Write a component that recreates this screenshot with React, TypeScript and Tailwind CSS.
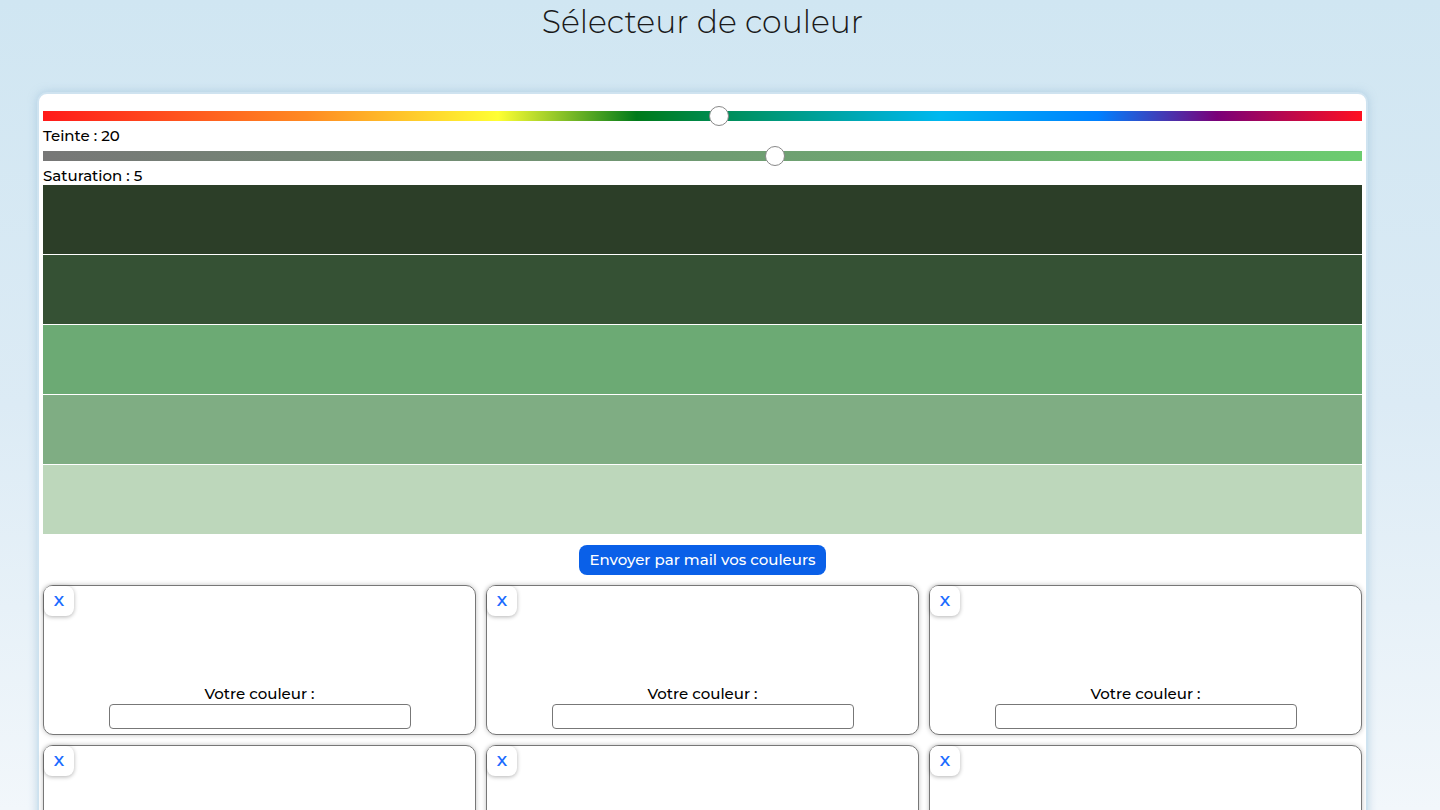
import React from "react";

const bands = ["#2c3e28", "#355134", "#6caa74", "#7fad83", "#bdd7bb"];

function Card() {
  return (
    <div className="relative h-[150px] rounded-[10px] border border-[#777] bg-white shadow-[0_0_5px_rgba(0,0,0,0.25)]">
      <div className="absolute left-0 top-0 flex h-[30px] w-[30px] items-center justify-center rounded-[8px] bg-white text-[15px] font-semibold text-[#1a6bff] shadow-[0_1px_4px_rgba(0,0,0,0.3)]">
        X
      </div>
      <div className="absolute bottom-[5px] left-0 right-0 flex flex-col items-center">
        <div className="text-[15px] font-medium leading-[18px] text-black">Votre couleur :</div>
        <div className="mt-[1px] h-[25px] w-[302px] rounded-[4px] border border-[#777] bg-white" />
      </div>
    </div>
  );
}

export default function App() {
  return (
    <div className="h-[810px] w-full overflow-hidden bg-[linear-gradient(180deg,#d0e6f2_0%,#dcebf5_50%,#f2f7fb_100%)] font-['Montserrat','Inter','Noto_Sans',sans-serif] text-black">
      <div className="ml-[37px] w-[1331px]">
        <h1 className="text-center text-[31.5px] font-light leading-[44px] text-[#1a1a1a]">Sélecteur de couleur</h1>
        <div className="mt-[48px] rounded-[10px] border-2 border-[#cfe3f0] bg-white px-[4px] pt-[17px] pb-[20px] shadow-[0_0_8px_rgba(140,180,210,0.5)]">
          <div className="relative h-[10px] bg-[linear-gradient(90deg,#ff1a1a_0%,#ff8a22_20%,#ffff33_34.5%,#007a1a_45%,#009a80_56%,#00b8f0_68%,#0080ff_80%,#7a0078_89%,#ff1020_100%)]">
            <div className="absolute left-[666px] top-[-5px] h-[20px] w-[20px] rounded-full border border-[#888] bg-white" />
          </div>
          <div className="mt-[5px] text-[15px] font-medium leading-[20px]">Teinte : 20</div>
          <div className="relative mt-[5px] h-[10px] bg-[linear-gradient(90deg,#777777_0%,#6f9a72_50%,#6ccc70_100%)]">
            <div className="absolute left-[722px] top-[-5px] h-[20px] w-[20px] rounded-full border border-[#888] bg-white" />
          </div>
          <div className="mt-[5px] text-[15px] font-medium leading-[19px]">Saturation : 5</div>
          <div className="flex flex-col gap-[1px]">
            {bands.map((c) => (
              <div key={c} className="h-[69px]" style={{ backgroundColor: c }} />
            ))}
          </div>
          <div className="mt-[11px] flex justify-center">
            <div className="rounded-[8px] bg-[#0a60e8] px-[10px] py-[6px] text-[15px] font-medium leading-[18px] text-white">
              Envoyer par mail vos couleurs
            </div>
          </div>
          <div className="mt-[10px] grid grid-cols-3 gap-[10px]">
            <Card />
            <Card />
            <Card />
            <Card />
            <Card />
            <Card />
          </div>
        </div>
      </div>
    </div>
  );
}
